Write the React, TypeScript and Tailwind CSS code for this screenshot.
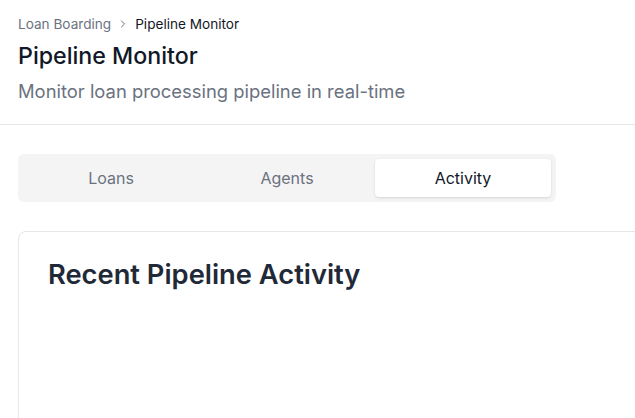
import React from "react";

export default function App() {
  return (
    <div className="w-[635px] h-[418px] overflow-hidden bg-white" style={{ fontFamily: "Inter, 'Noto Sans', sans-serif" }}>
      <div className="border-b border-[#e5e7eb] px-[18px] pt-[14px] pb-[19px]">
        <div className="flex items-center gap-1.5 text-[13.6px] leading-[20px]">
          <span className="text-[#6b7280]">Loan Boarding</span>
          <svg width="12" height="12" viewBox="0 0 24 24" fill="none" stroke="#6b7280" strokeWidth="2" strokeLinecap="round" strokeLinejoin="round"><path d="m9 18 6-6-6-6" /></svg>
          <span className="text-[#111827]">Pipeline Monitor</span>
        </div>
        <h1 className="mt-[6px] text-[23.2px] leading-[32px] font-medium text-[#111827]">Pipeline Monitor</h1>
        <p className="mt-[5px] text-[18.4px] leading-[28px] text-[#6b7280]">Monitor loan processing pipeline in real-time</p>
      </div>
      <div className="px-[18px] pt-[29px]">
        <div className="w-[538px] h-[48px] rounded-md bg-[#f4f4f5] p-[5px] grid grid-cols-3">
          <div className="flex items-center justify-center text-[16px] text-[#6b7280]">Loans</div>
          <div className="flex items-center justify-center text-[16px] text-[#6b7280]">Agents</div>
          <div className="flex items-center justify-center text-[16px] text-[#111827] bg-white rounded-sm shadow-sm">Activity</div>
        </div>
        <div className="mt-[29px] w-[800px] h-[300px] rounded-lg border border-[#e5e7eb] bg-white px-[29px] pt-[26px]">
          <h2 className="text-[27.3px] leading-[34px] font-semibold text-[#1f2937]">Recent Pipeline Activity</h2>
        </div>
      </div>
    </div>
  );
}
